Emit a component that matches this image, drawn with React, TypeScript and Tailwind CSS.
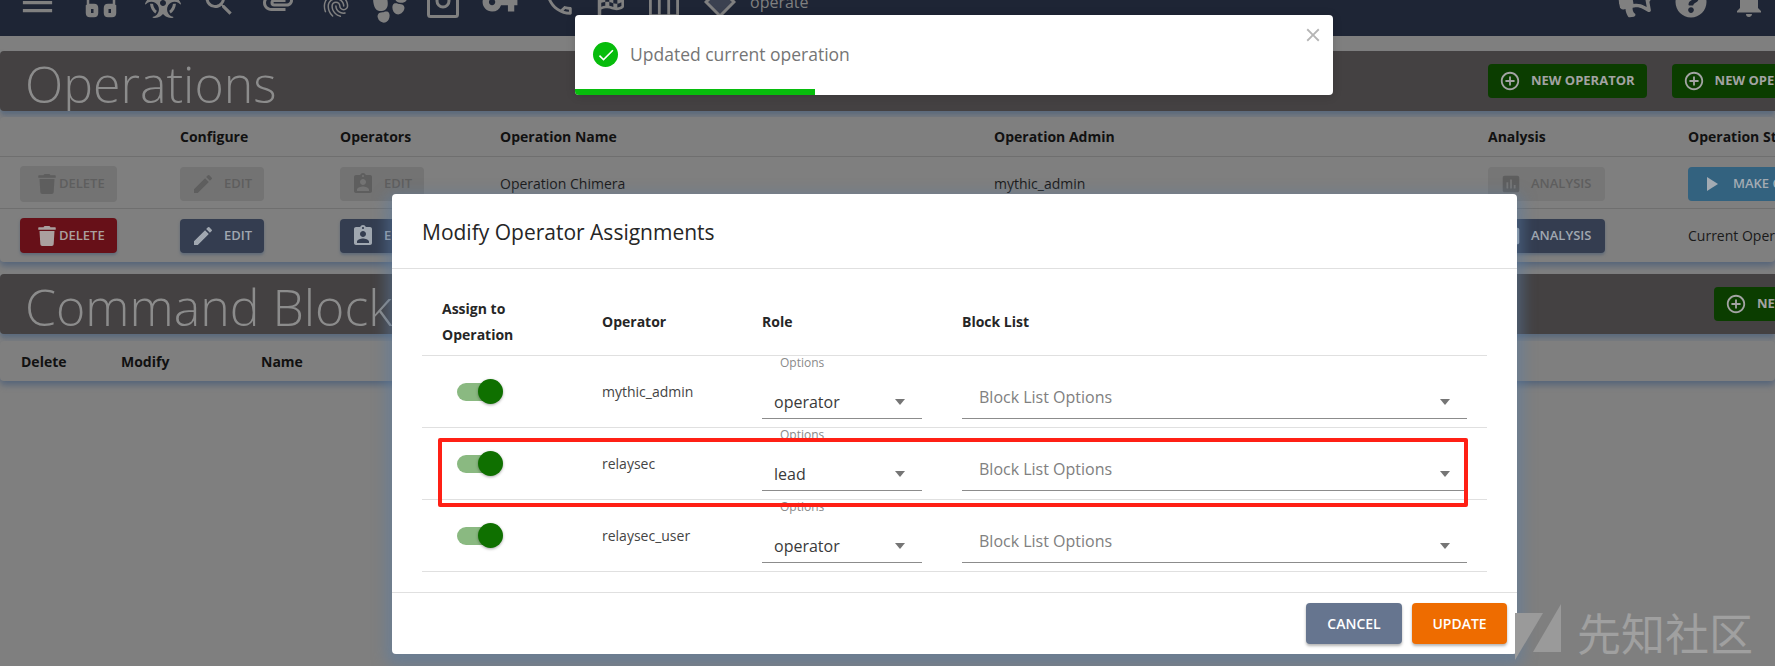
import React from "react";
import { FaBiohazard, FaFlagCheckered, FaQuestionCircle, FaTrash, FaBullhorn } from "react-icons/fa";
import {
  MdMenu,
  MdSearch,
  MdAttachment,
  MdFingerprint,
  MdVpnKey,
  MdOutlineCall,
  MdNotifications,
  MdEdit,
  MdAssignmentInd,
  MdAssessment,
  MdPlayArrow,
  MdAddCircleOutline,
  MdCheck,
  MdClose,
} from "react-icons/md";
import { IoFootsteps } from "react-icons/io5";

function HeadsetIcon({ size }: { size: number }) {
  return (
    <svg width={size} height={size} viewBox="0 0 36 36" fill="none" stroke="currentColor" strokeWidth="2.5">
      <path d="M5 22V14C5 6 11 2 18 2S31 6 31 14V22" />
      <path d="M6 21H11C13 21 14 22 14 24V29C14 31 13 32 11 32H7C5 32 4 31 4 29V22Z" fill="#808080" />
      <path d="M30 21H25C23 21 22 22 22 24V29C22 31 23 32 25 32H29C31 32 32 31 32 29V22Z" fill="#808080" />
      <rect x="8" y="25" width="2.5" height="4" fill="#1e2535" stroke="none" />
      <rect x="25.5" y="25" width="2.5" height="4" fill="#1e2535" stroke="none" />
    </svg>
  );
}

function CameraIcon({ size }: { size: number }) {
  return (
    <svg width={size} height={size} viewBox="0 0 32 32" fill="none" stroke="currentColor" strokeWidth="3">
      <rect x="1.5" y="1.5" width="29" height="29" rx="2" />
      <circle cx="16" cy="15" r="6" />
    </svg>
  );
}

function ColumnsIcon({ size }: { size: number }) {
  return (
    <svg width={size} height={size} viewBox="0 0 32 32" fill="none" stroke="currentColor" strokeWidth="3">
      <rect x="1.5" y="1.5" width="29" height="29" rx="1" />
      <path d="M11 2v28M21 2v28" />
    </svg>
  );
}

function TagIcon({ size }: { size: number }) {
  return (
    <svg width={size} height={size} viewBox="0 0 32 32" fill="#3b4150" stroke="currentColor" strokeWidth="3">
      <path d="M16 30 L2 16 L16 2 L30 16 Z" />
    </svg>
  );
}

function TopBar() {
  return (
    <header className="relative h-9 shrink-0 overflow-hidden bg-[#1e2535] text-[#808080]">
      <div className="-mt-[18px] flex h-10 items-center">
        <MdMenu size={39} className="ml-[18px] shrink-0" />
        <div className="ml-[26px] shrink-0">
          <HeadsetIcon size={36} />
        </div>
        <FaBiohazard size={36} className="ml-[26px] shrink-0" />
        <MdSearch size={36} className="ml-[20px] shrink-0" />
        <MdAttachment size={36} className="ml-[23px] shrink-0" />
        <MdFingerprint size={36} className="ml-[22px] shrink-0" />
        <IoFootsteps size={44} className="ml-[15px] shrink-0" />
        <div className="ml-[14px] shrink-0">
          <CameraIcon size={32} />
        </div>
        <MdVpnKey size={38} className="ml-[22px] shrink-0" />
        <MdOutlineCall size={34} className="ml-[23px] shrink-0" />
        <FaFlagCheckered size={28} className="ml-[20px] shrink-0" />
        <div className="ml-[25px] shrink-0">
          <ColumnsIcon size={30} />
        </div>
        <div className="ml-[25px] shrink-0">
          <TagIcon size={32} />
        </div>
        <span className="ml-[14px] text-[16px]">operate</span>
        <div className="ml-auto mr-[8px] flex items-center gap-[24px]">
          <FaBullhorn size={32} className="rotate-[-10deg]" />
          <FaQuestionCircle size={32} />
          <MdNotifications size={36} />
        </div>
      </div>
    </header>
  );
}

function SectionTitle({ title, width, children }: { title: string; width: string; children: React.ReactNode }) {
  return (
    <div className="flex h-[60px] items-center overflow-hidden rounded-l-[4px] bg-[#444142] shadow-[0_4px_5px_#5b6a7d]">
      <div className={`${width} shrink-0 whitespace-nowrap pl-[25px] pt-[5px] text-[50px] font-light leading-none text-[#8c8c8c]`}>{title}</div>
      {children}
    </div>
  );
}

function GreenButton({ label }: { label: string }) {
  return (
    <div className="mr-[25px] flex h-[34px] shrink-0 items-center gap-[10px] whitespace-nowrap rounded-[4px] bg-[#0b3d00] pl-[11px] pr-[12px] text-[13px] font-bold text-[#a3a3a3]">
      <MdAddCircleOutline size={22} />
      {label}
    </div>
  );
}

type BtnProps = { icon: React.ReactNode; label: string; className: string };

function ActionButton({ icon, label, className }: BtnProps) {
  return (
    <div className={`flex h-[34px] items-center whitespace-nowrap rounded-[4px] text-[13px] font-semibold ${className}`}>
      {icon}
      {label}
    </div>
  );
}

const cols = "grid grid-cols-[180px_160px_160px_494px_494px_200px_87px] items-center";

function OperationsTable() {
  const off = "bg-[#737373] text-[#5e5e5e]";
  const on = "bg-[#343d50] text-[#a0a7b0] shadow-[0_2px_3px_#5f6a78]";
  return (
    <div className="mt-[6px] h-[145px] overflow-hidden rounded-[4px] bg-[#7f7f7f] text-[14px] text-[#1a1a1a] shadow-[0_4px_6px_#56657a]">
      <div className={`${cols} h-[40px] border-b border-[#6f6f6f] font-bold text-[#111]`}>
        <span />
        <span>Configure</span>
        <span>Operators</span>
        <span>Operation Name</span>
        <span>Operation Admin</span>
        <span>Analysis</span>
        <span className="whitespace-nowrap">Operation Status</span>
      </div>
      <div className={`${cols} h-[52px] border-b border-[#6f6f6f] pt-[2px]`}>
        <div className="pl-5">
          <ActionButton icon={<FaTrash size={20} className="mr-[2px]" />} label="DELETE" className={`${off} h-[36px] w-[97px] pl-[17px]`} />
        </div>
        <ActionButton icon={<MdEdit size={24} className="mr-[9px]" />} label="EDIT" className={`${off} w-[84px] pl-[11px]`} />
        <ActionButton icon={<MdAssignmentInd size={24} className="mr-[9px]" />} label="EDIT" className={`${off} w-[84px] pl-[11px]`} />
        <span>Operation Chimera</span>
        <span>mythic_admin</span>
        <ActionButton icon={<MdAssessment size={22} className="mr-[9px]" />} label="ANALYSIS" className="w-[117px] bg-[#767676] pl-[12px] text-[#5e5e5e]" />
        <ActionButton icon={<MdPlayArrow size={24} className="mr-[10px]" />} label="MAKE CURRENT" className="w-[150px] bg-[#33627f] pl-[11px] text-[#a3abb3]" />
      </div>
      <div className={`${cols} h-[52px] pt-[1px]`}>
        <div className="pl-5">
          <ActionButton icon={<FaTrash size={20} className="mr-[2px]" />} label="DELETE" className="h-[35px] w-[97px] bg-[#671018] pl-[17px] text-[#aaa09f] shadow-[0_2px_3px_#5f6a78]" />
        </div>
        <ActionButton icon={<MdEdit size={24} className="mr-[9px]" />} label="EDIT" className={`${on} w-[84px] pl-[11px]`} />
        <ActionButton icon={<MdAssignmentInd size={24} className="mr-[9px]" />} label="EDIT" className={`${on} w-[84px] pl-[11px]`} />
        <span />
        <span />
        <ActionButton icon={<MdAssessment size={22} className="mr-[9px]" />} label="ANALYSIS" className={`${on} w-[117px] pl-[12px]`} />
        <span className="whitespace-nowrap">Current Operation</span>
      </div>
    </div>
  );
}

function BlockTable() {
  return (
    <div className="mt-[7px] grid h-[40px] grid-cols-[100px_140px_1fr] items-center rounded-[4px] bg-[#7f7f7f] pl-[21px] text-[14px] font-bold text-[#111] shadow-[0_4px_6px_#56657a]">
      <span>Delete</span>
      <span>Modify</span>
      <span>Name</span>
    </div>
  );
}

function Caret() {
  return <span className="h-0 w-0 shrink-0 border-x-[5.5px] border-t-[6px] border-x-transparent border-t-[#757575]" />;
}

function Toggle() {
  return (
    <div className="relative ml-[35px] h-[18px] w-[40px] rounded-full bg-[#8ab981]">
      <span className="absolute -top-[4px] left-[21px] h-[25px] w-[25px] rounded-full bg-[#0f7000] shadow-[0_1px_3px_rgba(0,0,0,0.35)]" />
    </div>
  );
}

const modalCols = "grid grid-cols-[180px_160px_200px_1fr]";

function OperatorRow({ name, role }: { name: string; role: string }) {
  return (
    <div className={`${modalCols} h-[72px] items-center border-b border-[#e0e0e0]`}>
      <Toggle />
      <span className="text-[14px] text-[#444]">{name}</span>
      <div className="flex h-full flex-col self-start">
        <span className="pl-[18px] text-[12px] leading-[14px] text-[#8a8a8a]">Options</span>
        <div className="mt-[16px] flex h-[33px] w-[160px] items-center justify-between border-b border-[#8c8c8c] pl-[12px] pr-[17px] text-[16px] text-[#3a3a3a]">
          {role}
          <Caret />
        </div>
      </div>
      <div className="flex h-full flex-col self-start pt-[30px]">
        <div className="flex h-[33px] w-[505px] items-center justify-between border-b border-[#8c8c8c] pl-[17px] pr-[17px] text-[16px] text-[#808080]">
          <span className="-mt-[10px]">Block List Options</span>
          <Caret />
        </div>
      </div>
    </div>
  );
}

function OperatorModal() {
  return (
    <div className="absolute left-[392px] top-[194px] h-[460px] w-[1125px] rounded-[4px] bg-white shadow-[0_6px_14px_6px_rgba(90,125,165,0.5)]">
      <div className="flex h-[75px] items-center border-b border-[#e0e0e0] pl-[30px] pt-[3px] text-[21px] font-medium text-[#262626]">
        Modify Operator Assignments
      </div>
      <div className="mx-[30px] pb-[20px] pt-[20px]">
        <div className={`${modalCols} h-[67px] items-center border-b border-[#e0e0e0] text-[14px] font-bold leading-[26px] text-[#262626]`}>
          <span className="pl-5">
            Assign to
            <br />
            Operation
          </span>
          <span>Operator</span>
          <span>Role</span>
          <span>Block List</span>
        </div>
        <OperatorRow name="mythic_admin" role="operator" />
        <OperatorRow name="relaysec" role="lead" />
        <OperatorRow name="relaysec_user" role="operator" />
      </div>
      <div className="flex h-[62px] justify-end gap-[10px] border-t border-[#e0e0e0] pr-[10px] pt-[10px]">
        <div className="flex h-[41px] w-[96px] items-center justify-center rounded-[4px] bg-[#66758f] text-[14px] font-semibold text-white shadow-[0_2px_3px_rgba(0,0,0,0.3)]">
          CANCEL
        </div>
        <div className="flex h-[41px] w-[95px] items-center justify-center rounded-[4px] bg-[#ee6c00] text-[14px] font-semibold text-white shadow-[0_2px_3px_rgba(0,0,0,0.3)]">
          UPDATE
        </div>
      </div>
      {/* red annotation from the original screenshot */}
      <div className="absolute left-[46px] top-[244px] h-[69px] w-[1030px] rounded-[2px] border-4 border-[#ff2015]" />
    </div>
  );
}

function Toast() {
  return (
    <div className="absolute left-[575px] top-[15px] h-[80px] w-[758px] overflow-hidden rounded-[4px] bg-white shadow-[0_1px_10px_rgba(0,0,0,0.15)]">
      <div className="flex h-[80px] items-center pb-[1px] pl-[18px]">
        <span className="mr-[12px] flex h-[25px] w-[25px] items-center justify-center rounded-full bg-[#07bc0c] text-white">
          <MdCheck size={20} />
        </span>
        <span className="text-[17.5px] text-[#757575]">Updated current operation</span>
      </div>
      <MdClose size={22} className="absolute right-[9px] top-[9px] text-[#b5b5b5]" />
      <div className="absolute bottom-0 left-0 h-[6px] w-[240px] bg-[#07bc0c]" />
    </div>
  );
}

function Watermark() {
  return (
    <div className="absolute left-[1515px] top-[604px] flex items-start text-[#a0a0a0]">
      <svg width="48" height="56" viewBox="0 0 48 56" fill="#9a9a9a">
        <path d="M0 9H28L0 56Z" />
        <path d="M46 0V48H18Z" />
      </svg>
      <span className="ml-[14px] mt-[2px] whitespace-nowrap font-['Noto_Sans_CJK_SC',sans-serif] text-[44px] leading-[52px]">
        先知社区
      </span>
    </div>
  );
}

export default function App() {
  return (
    <div className="relative h-[666px] w-[1775px] overflow-hidden bg-[#7f7f7f] font-['Open_Sans','Noto_Sans',sans-serif]">
      <TopBar />
      <main className="mt-[15px]">
        <SectionTitle title="Operations" width="w-[1488px]">
          <GreenButton label="NEW OPERATOR" />
          <GreenButton label="NEW OPERATION" />
        </SectionTitle>
        <OperationsTable />
        <div className="mt-[12px]">
          <SectionTitle title="Command Blocklists" width="w-[1714px]">
            <GreenButton label="NEW COMMAND BLOCKLIST" />
          </SectionTitle>
        </div>
        <BlockTable />
      </main>
      <OperatorModal />
      <Toast />
      <Watermark />
    </div>
  );
}
